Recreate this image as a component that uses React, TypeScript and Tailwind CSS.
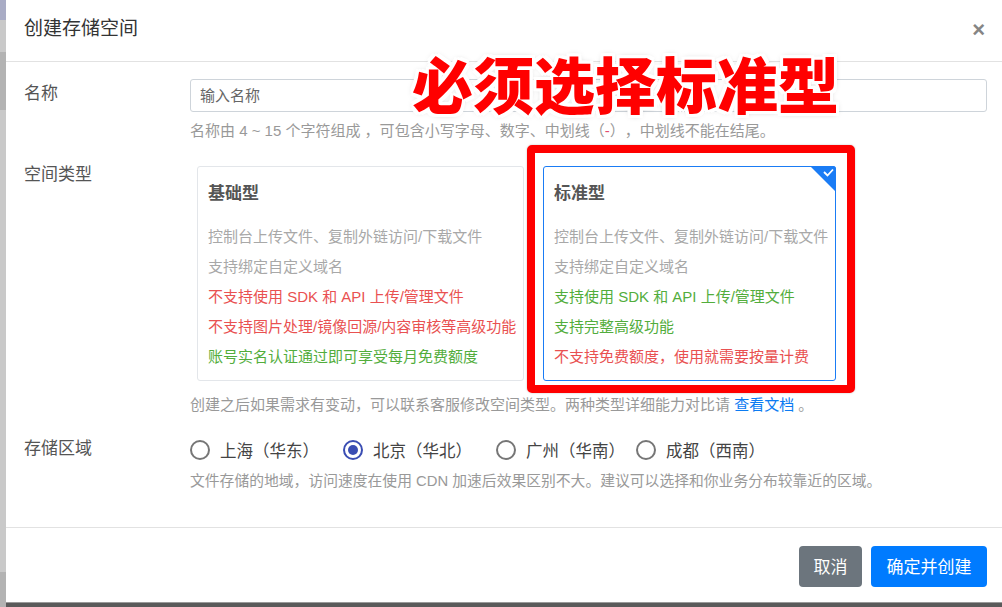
import React from "react";

const font = "font-['Liberation_Sans','Noto_Sans_CJK_SC',sans-serif]";

function Radio({ checked, label, mr }: { checked?: boolean; label: string; mr: string }) {
  return (
    <label className={`flex items-center ${mr}`}>
      {checked ? (
        <span className="w-[20px] h-[20px] rounded-full border-[2px] border-[#3a4db3] flex items-center justify-center">
          <span className="w-[10px] h-[10px] rounded-full bg-[#3a4db3]" />
        </span>
      ) : (
        <span className="w-[20px] h-[20px] rounded-full border-[2px] border-[#767676]" />
      )}
      <span className="ml-[10px] text-[16.5px] leading-[24px] pt-[2px] text-[#444] whitespace-nowrap">{label}</span>
    </label>
  );
}

function Card({
  title,
  items,
  w,
  selected,
}: {
  title: string;
  items: { t: string; c: string }[];
  w: string;
  selected?: boolean;
}) {
  return (
    <div
      className={`relative ${w} h-[215px] rounded-[3px] px-[10px] ${
        selected ? "border border-[#1a7cf5]" : "border border-[#e3e6ea]"
      }`}
    >
      <div className="pt-[15px] text-[17px] leading-[24px] font-bold text-[#555]">{title}</div>
      <div className="mt-[16px]">
        {items.map((it, i) => (
          <div key={i} className={`text-[15px] leading-[30px] whitespace-nowrap ${it.c}`}>
            {it.t}
          </div>
        ))}
      </div>
      {selected && (
        <div className="absolute top-[-1px] right-[-1px] w-[26px] h-[26px] overflow-hidden rounded-tr-[3px]">
          <svg width="26" height="26" viewBox="0 0 26 26">
            <polygon points="0,0 26,0 26,26" fill="#1a7cf5" />
            <polyline points="14,6 17.5,9.5 23,3.5" fill="none" stroke="#fff" strokeWidth="1.8" />
          </svg>
        </div>
      )}
    </div>
  );
}

const gray = "text-[#a8a8a8]";
const red = "text-[#e95151]";
const green = "text-[#52ad3c]";

export default function App() {
  return (
    <div className={`w-[1002px] h-[607px] relative overflow-hidden flex bg-[#c9c9c9] [text-spacing-trim:space-all] ${font}`}>
      {/* left strip of underlying page */}
      <div className="w-[6px] h-full flex flex-col">
        <div className="h-[20px] bg-[#a9acc5]" />
        <div className="h-[32px] bg-[#c9c9c9]" />
        <div className="h-[58px] bg-[#b3b3b3]" />
        <div className="flex-1 bg-[#c9c9c9]" />
        <div className="h-[35px] bg-[#b3b3b3]" />
      </div>

      <div className="flex-1 flex flex-col">
        {/* modal */}
        <div className="h-[603px] bg-white flex flex-col border-b border-[#9a9a9a]">
          {/* header */}
          <div className="h-[62px] flex items-center justify-between pl-[18px] pr-[17px] pb-[2px] border-b border-[#e2e2e2]">
            <div className="text-[19px] text-[#333]">创建存储空间</div>
            <div className="text-[22px] font-bold text-[#858585] leading-none">×</div>
          </div>

          {/* body */}
          <div className="flex-1 pl-[18px] pr-[15px]">
            {/* name */}
            <div className="flex mt-[17px]">
              <div className="w-[166px] h-[33px] flex items-center pb-[3px] text-[17px] text-[#555]">名称</div>
              <div className="flex-1">
                <div className="h-[33px] border border-[#ced4da] rounded-[3px] flex items-center pl-[9px] pt-[1px] text-[15px] text-[#666]">
                  输入名称
                </div>
                <div className="mt-[9px] text-[15px] leading-[20px] text-[#999] whitespace-nowrap">
                  名称由 4 ~ 15 个字符组成 ，可包含小写字母、数字、中划线（<span className="text-[#e34a6f]">-</span>），中划线不能在结尾。
                </div>
              </div>
            </div>

            {/* type */}
            <div className="flex mt-[21px]">
              <div className="w-[166px] text-[17px] leading-[24px] pt-[1px] text-[#555]">空间类型</div>
              <div className="flex-1 pt-[4px]">
                <div className="flex ml-[7px] gap-[19px]">
                  <Card
                    title="基础型"
                    w="w-[327px]"
                    items={[
                      { t: "控制台上传文件、复制外链访问/下载文件", c: gray },
                      { t: "支持绑定自定义域名", c: gray },
                      { t: "不支持使用 SDK 和 API 上传/管理文件", c: red },
                      { t: "不支持图片处理/镜像回源/内容审核等高级功能", c: red },
                      { t: "账号实名认证通过即可享受每月免费额度", c: green },
                    ]}
                  />
                  <Card
                    title="标准型"
                    w="w-[293px]"
                    selected
                    items={[
                      { t: "控制台上传文件、复制外链访问/下载文件", c: gray },
                      { t: "支持绑定自定义域名", c: gray },
                      { t: "支持使用 SDK 和 API 上传/管理文件", c: green },
                      { t: "支持完整高级功能", c: green },
                      { t: "不支持免费额度，使用就需要按量计费", c: red },
                    ]}
                  />
                </div>
                <div className="mt-[14px] text-[15px] leading-[20px] text-[#999] whitespace-nowrap">
                  创建之后如果需求有变动，可以联系客服修改空间类型。两种类型详细能力对比请 <span className="text-[#0b7bf2]">查看文档</span> 。
                </div>
              </div>
            </div>

            {/* region */}
            <div className="flex mt-[21px]">
              <div className="w-[166px] text-[17px] leading-[24px] pt-[1px] text-[#555]">存储区域</div>
              <div className="flex-1">
                <div className="flex items-center pt-[1px]">
                  <Radio label="上海（华东）" mr="mr-[24px]" />
                  <Radio checked label="北京（华北）" mr="mr-[24px]" />
                  <Radio label="广州（华南）" mr="mr-[11px]" />
                  <Radio label="成都（西南）" mr="mr-0" />
                </div>
                <div className="mt-[8px] text-[14.8px] leading-[20px] text-[#999] whitespace-nowrap">
                  文件存储的地域，访问速度在使用 CDN 加速后效果区别不大。建议可以选择和你业务分布较靠近的区域。
                </div>
              </div>
            </div>
          </div>

          {/* footer */}
          <div className="h-[75px] border-t border-[#e2e2e2] flex justify-end items-start pt-[18px] pr-[15px] gap-[9px]">
            <button className="h-[41px] w-[63px] rounded-[4px] bg-[#6c757d] text-white text-[17px] pt-[2px]">取消</button>
            <button className="h-[41px] w-[116px] rounded-[4px] bg-[#007bff] text-white text-[17px] pt-[2px]">确定并创建</button>
          </div>
        </div>
        <div className="flex-1 bg-[#5a5a5a]" />
      </div>

      {/* annotations */}
      <div className="absolute left-[527px] top-[145px] w-[328px] h-[248px] border-[8px] border-[#ff0000] rounded-[5px] shadow-[0_0_2px_rgba(0,0,0,0.25)]" />
      <div className="absolute left-[412px] top-[52px] text-[61px] leading-none font-black text-[#ff0000] whitespace-nowrap font-['Noto_Sans_CJK_SC',sans-serif] [text-shadow:-3px_-3px_0_#fff,3px_-3px_0_#fff,-3px_3px_0_#fff,3px_3px_0_#fff,0_-3px_0_#fff,0_3px_0_#fff,-3px_0_0_#fff,3px_0_0_#fff,0_0_6px_rgba(0,0,0,0.35)]">
        必须选择标准型
      </div>
    </div>
  );
}
